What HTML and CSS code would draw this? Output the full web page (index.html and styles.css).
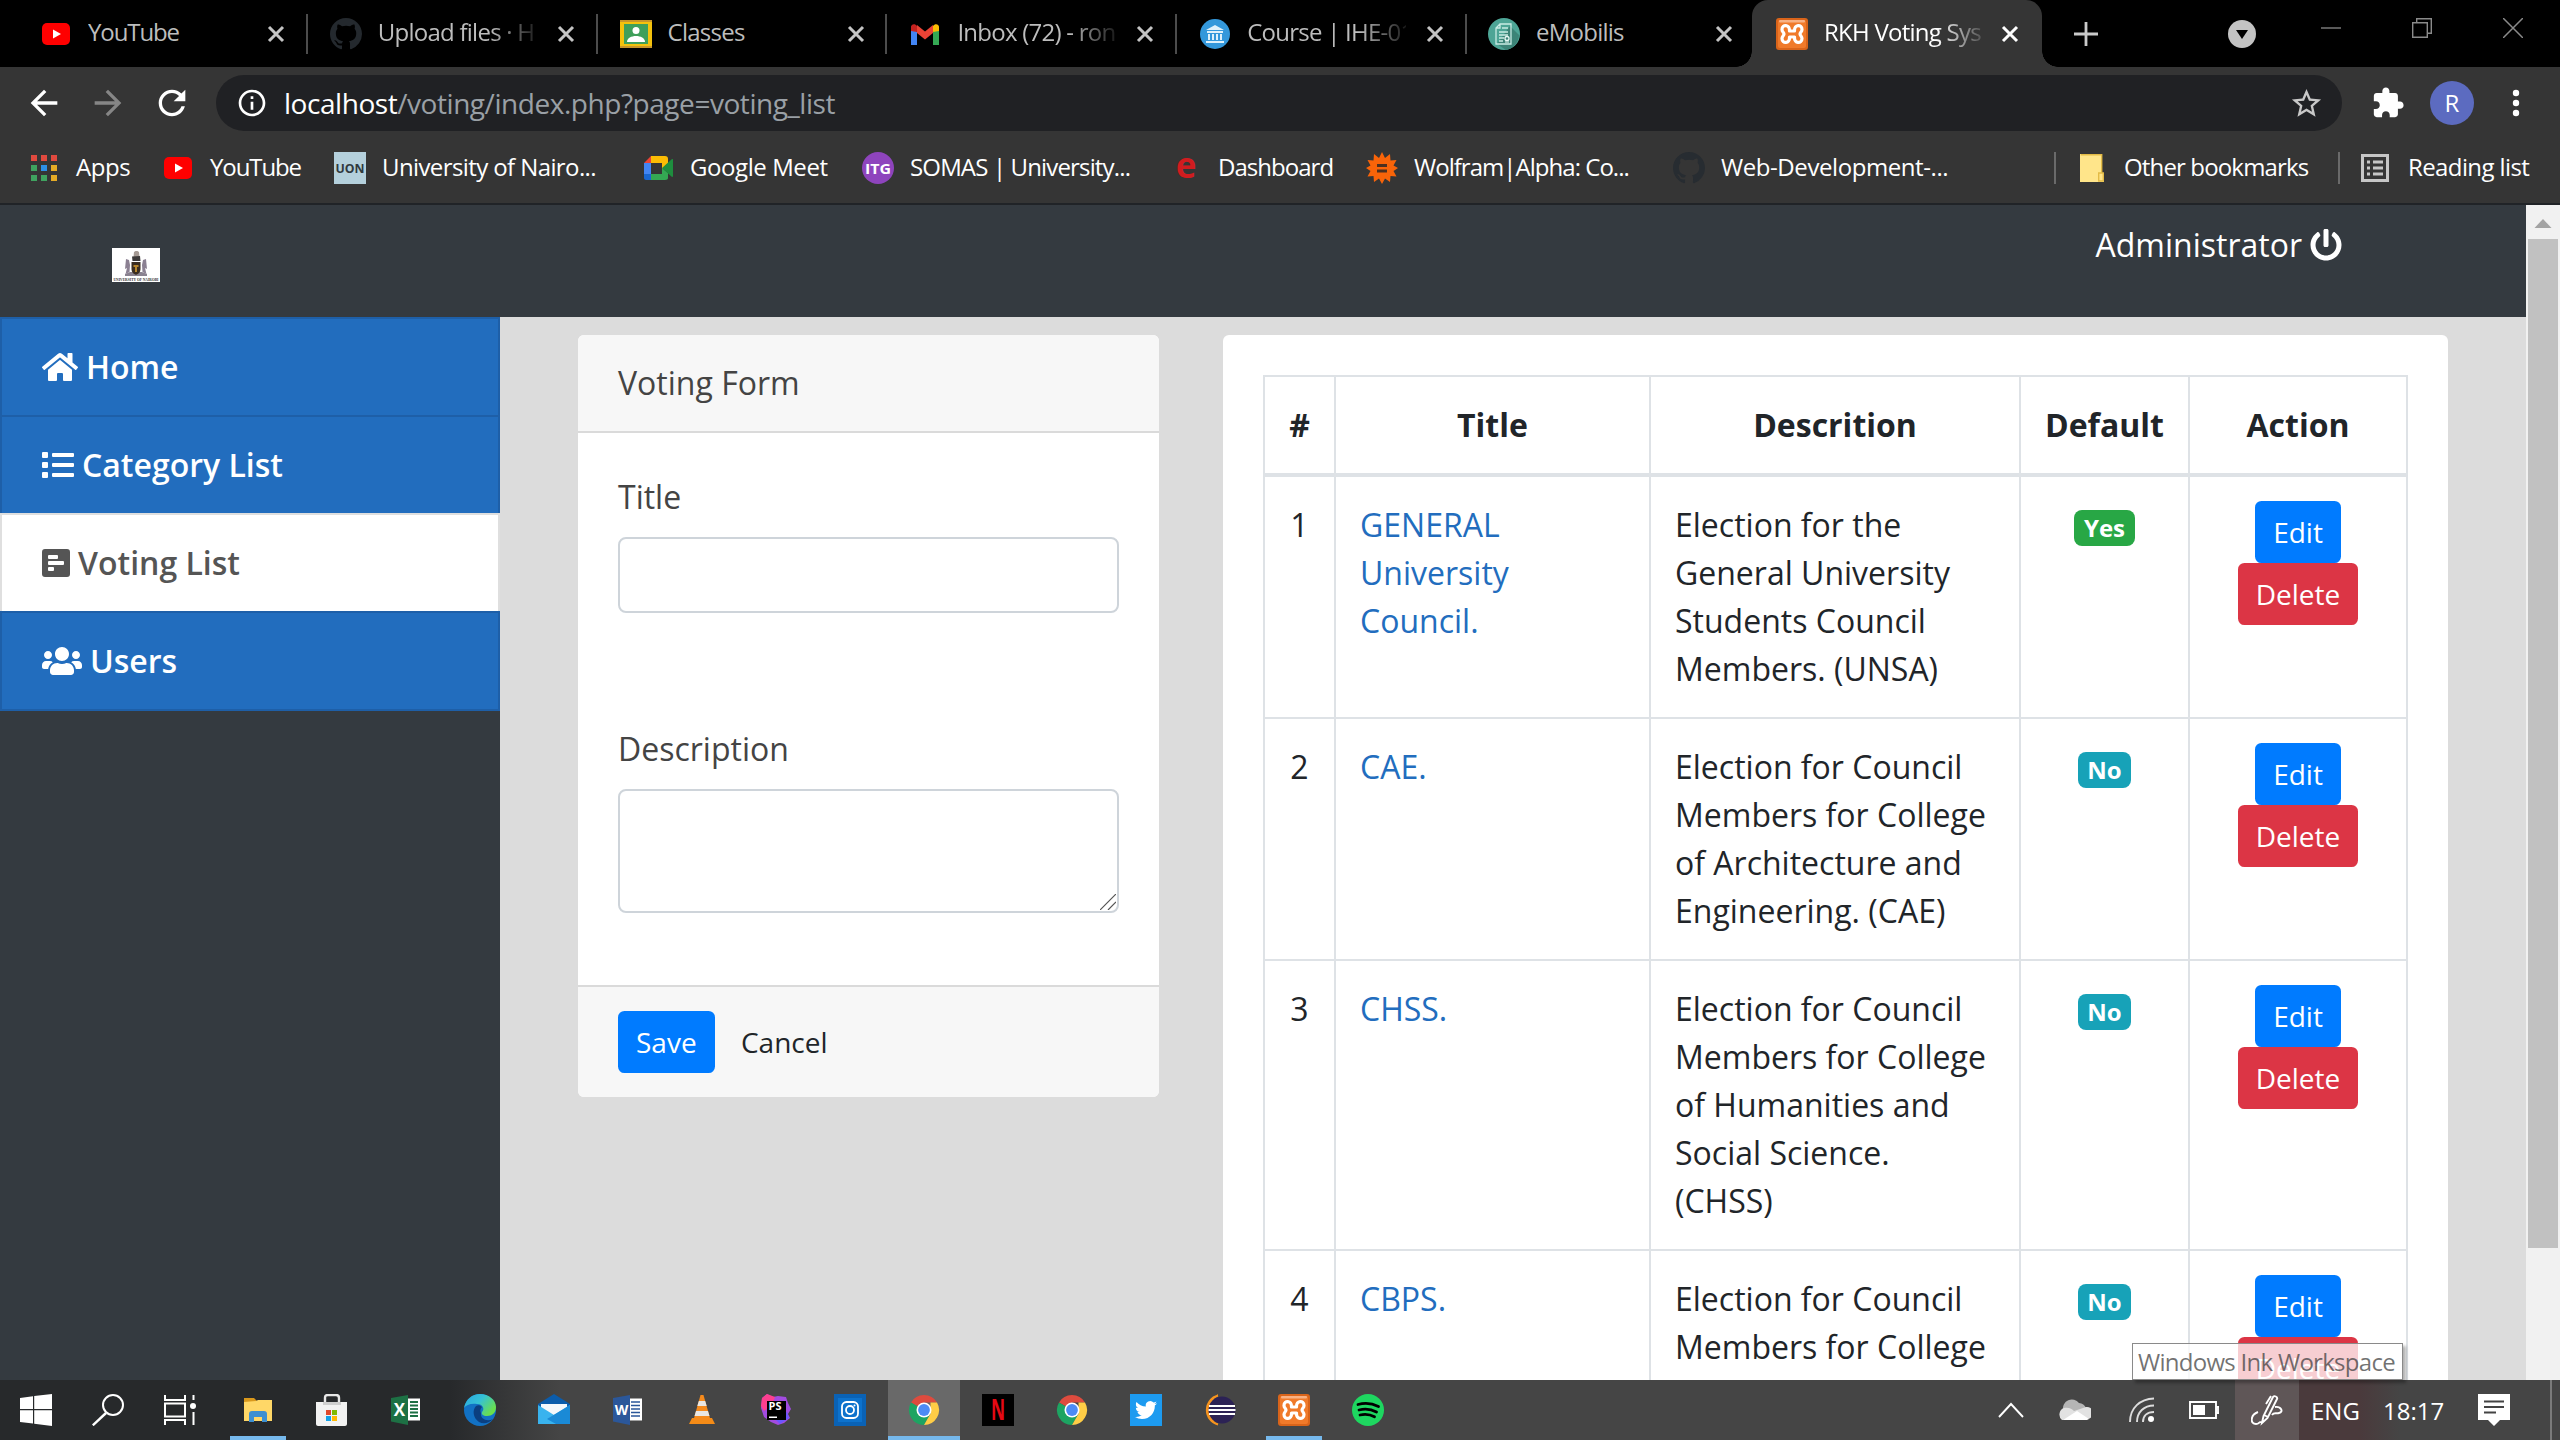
FILE: index.html
```html
<!DOCTYPE html>
<html lang="en">
<head>
<meta charset="utf-8">
<title>RKH Voting System</title>
<link rel="stylesheet" href="styles.css">
</head>
<body>
<svg class="defs" aria-hidden="true">
  <symbol id="x" viewBox="0 0 20 20"><path d="M3 3l14 14M17 3L3 17" fill="none" stroke="currentColor" stroke-width="3"/></symbol>
  <symbol id="youtube" viewBox="0 0 32 32"><rect x="2" y="5" width="28" height="22" rx="5" fill="#f00"/><path d="M13 11.500v9l8-4.500z" fill="#fff"/></symbol>
  <symbol id="github" viewBox="0 0 16 16"><path fill="currentColor" d="M8 0C3.580 0 0 3.580 0 8c0 3.540 2.290 6.530 5.470 7.590.4.070.55-.17.55-.38 0-.19-.01-.82-.01-1.490-2.010.37-2.530-.49-2.690-.94-.09-.23-.48-.94-.82-1.130-.28-.15-.68-.52-.01-.53.63-.01 1.080.58 1.230.82.72 1.210 1.870.87 2.330.66.07-.52.28-.87.51-1.070-1.780-.2-3.640-.89-3.640-3.950 0-.87.31-1.590.82-2.150-.08-.2-.36-1.020.08-2.120 0 0 .67-.21 2.200.82.64-.18 1.320-.27 2-.27s1.360.09 2 .27c1.530-1.040 2.200-.82 2.200-.82.44 1.100.16 1.920.08 2.120.51.56.82 1.270.82 2.150 0 3.070-1.870 3.750-3.650 3.950.29.25.54.73.54 1.480 0 1.070-.01 1.930-.01 2.200 0 .21.15.46.55.38A8.010 8.010 0 0 0 16 8c0-4.420-3.580-8-8-8z"/></symbol>
  <symbol id="xampp" viewBox="0 0 32 32"><rect width="32" height="32" rx="3" fill="#d9641a"/><rect x="2" y="2" width="28" height="28" rx="2" fill="#f07a2a"/><rect x="3" y="2" width="26" height="2.500" rx="1" fill="#f8b184"/><path d="M13.500 13h5C18 6 26 6 26 11.500c0 2.500-2 3-2 4.500s2 2 2 4.500c0 5.500-8 5.500-7.500-1.500h-5C14 26 6 26 6 20.500c0-2.500 2-3 2-4.500s-2-2-2-4.500C6 6 14 6 13.500 13z" fill="#f07a2a" stroke="#fff" stroke-width="3.200" stroke-linejoin="round"/></symbol>
  <symbol id="chrome" viewBox="0 0 32 32"><path d="M16 16L3 8.500A15 15 0 0 1 29 8.500H16z" fill="#dd4b3e"/><path d="M3 8.500A15 15 0 0 0 16 31l6.500-11.300L16 16z" fill="#1da462"/><path d="M29 8.500A15 15 0 0 1 16 31l6.500-11.300V8.500z" fill="#ffcd46"/><circle cx="16" cy="16" r="7.500" fill="#fff"/><circle cx="16" cy="16" r="5.900" fill="#4c8bf5"/></symbol>
</svg>

<header class="tabs">
  <div class="tab"><svg class="fav"><use href="#youtube"/></svg><span class="label snug">YouTube</span><svg class="close"><use href="#x"/></svg></div>
  <div class="tab"><svg class="fav gh"><use href="#github"/></svg><span class="label fade">Upload files · H</span><svg class="close"><use href="#x"/></svg></div>
  <div class="tab"><svg class="fav" viewBox="0 0 32 32"><rect y="2" width="32" height="28" fill="#f4c20d"/><rect y="2" width="32" height="2" fill="#c9962a"/><rect y="28" width="32" height="2" fill="#c9962a"/><rect x="4" y="6" width="24" height="20" fill="#3f9f5a"/><circle cx="16" cy="12.500" r="3.500" fill="#fff"/><path d="M7 24c0-8 18-8 18 0z" fill="#fff"/></svg><span class="label">Classes</span><svg class="close"><use href="#x"/></svg></div>
  <div class="tab"><svg class="fav" viewBox="0 0 32 32"><path d="M2 8v19h6V14z" fill="#4285f4"/><path d="M30 8v19h-6V14z" fill="#34a853"/><path d="M24 14V8c2-3 6-2 6 1v4z" fill="#fbbc04"/><path d="M8 14V8C6 5 2 6 2 9v4z" fill="#c5221f"/><path d="M8 7l8 6.500L24 7v8l-8 6.500L8 15z" fill="#ea4335"/></svg><span class="label fade">Inbox (72) - ron</span><svg class="close"><use href="#x"/></svg></div>
  <div class="tab"><svg class="fav" viewBox="0 0 32 32"><circle cx="16" cy="16" r="15" fill="#3498db"/><path d="M7 12l9-5 9 5zM8 13h16v2H8zM9 16h2v6H9zM13 16h2v6h-2zM17 16h2v6h-2zM21 16h2v6h-2zM7 23h18v2H7z" fill="#dff1fb"/></svg><span class="label fade">Course | IHE-01</span><svg class="close"><use href="#x"/></svg></div>
  <div class="tab"><svg class="fav" viewBox="0 0 32 32"><circle cx="16" cy="16" r="16" fill="#4da596"/><path d="M22 8l9 9a16 16 0 0 1-13 15l-9-6z" fill="#3c8477"/><path d="M12 6h11v20H8V10zM12 6v4H8M14 10h6M11 14h9M11 17h9M11 20h5M11 23h4" fill="none" stroke="#c8ebe4" stroke-width="1.300"/><circle cx="19" cy="20.500" r="2" fill="none" stroke="#e8faf6" stroke-width="1.300"/><path d="M18 22v3M20 22v3" stroke="#e8faf6"/></svg><span class="label">eMobilis</span><svg class="close"><use href="#x"/></svg></div>
  <div class="tab active"><svg class="fav"><use href="#xampp"/></svg><span class="label fade">RKH Voting Sys</span><svg class="close"><use href="#x"/></svg></div>
  <div class="window-controls">
    <svg viewBox="0 0 24 24" width="24" height="24"><path d="M12 0v24M0 12h24" stroke="#c9c9c9" stroke-width="2.800"/></svg>
    <svg viewBox="0 0 28 28" width="28" height="28"><circle cx="14" cy="14" r="14" fill="#c3c3c3"/><path d="M8 10h12l-6 9z" fill="#000"/></svg>
    <svg class="raised" viewBox="0 0 20 20" width="20" height="20"><path d="M0 10h20" stroke="#777" stroke-width="1.500"/></svg>
    <svg class="raised" viewBox="0 0 20 20" width="20" height="20"><path d="M.7 4.700h14.600v14.600H.7zM4.700 4.500V.7h14.600v14.600h-3.800" fill="none" stroke="#8a8a8a" stroke-width="1.400"/></svg>
    <svg class="raised" viewBox="0 0 20 20" width="20" height="20"><path d="M0 0l20 20M20 0L0 20" stroke="#8a8a8a" stroke-width="1.500"/></svg>
  </div>
</header>

<nav class="toolbar">
  <svg viewBox="0 0 24 24"><path fill="#fff" d="M20 11H7.830l5.590-5.590L12 4l-8 8 8 8 1.410-1.410L7.830 13H20v-2z"/></svg>
  <svg viewBox="0 0 24 24"><path fill="#868686" d="M4 11h12.170l-5.590-5.590L12 4l8 8-8 8-1.410-1.410L16.170 13H4z"/></svg>
  <svg viewBox="0 0 24 24"><path fill="#fff" d="M17.650 6.350C16.200 4.900 14.210 4 12 4c-4.420 0-7.990 3.580-7.990 8s3.570 8 7.990 8c3.730 0 6.840-2.550 7.730-6h-2.080c-.82 2.330-3.040 4-5.650 4-3.310 0-6-2.690-6-6s2.690-6 6-6c1.660 0 3.140.69 4.220 1.780L13 11h7V4l-2.350 2.350z"/></svg>
  <div class="omnibox">
    <svg viewBox="0 0 24 24" width="32" height="32"><path fill="#fff" d="M11 7h2v2h-2zm0 4h2v6h-2zm1-9C6.480 2 2 6.480 2 12s4.480 10 10 10 10-4.480 10-10S17.520 2 12 2zm0 18c-4.410 0-8-3.590-8-8s3.590-8 8-8 8 3.590 8 8-3.590 8-8 8z"/></svg>
    <span class="url"><b>localhost</b>/voting/index.php?page=voting_list</span>
    <svg viewBox="0 0 24 24" width="35" height="35"><path fill="#c8c8c8" d="M22 9.240l-7.190-.62L12 2 9.190 8.630 2 9.240l5.460 4.730L5.820 21 12 17.270 18.180 21l-1.630-7.030L22 9.240zM12 15.400l-3.760 2.270 1-4.280-3.320-2.880 4.380-.38L12 6.100l1.710 4.040 4.380.38-3.320 2.880 1 4.280L12 15.400z"/></svg>
  </div>
  <svg class="puzzle" viewBox="0 0 24 24"><path fill="#fff" d="M20.500 11H19V7c0-1.100-.9-2-2-2h-4V3.500C13 2.120 11.880 1 10.500 1S8 2.120 8 3.500V5H4c-1.100 0-1.990.9-1.990 2v3.800H3.500c1.490 0 2.700 1.210 2.700 2.700s-1.210 2.700-2.700 2.700H2V20c0 1.100.9 2 2 2h3.800v-1.500c0-1.490 1.210-2.700 2.700-2.700 1.490 0 2.700 1.210 2.700 2.700V22H17c1.100 0 2-.9 2-2v-4h1.500c1.380 0 2.500-1.120 2.500-2.500S21.880 11 20.500 11z"/></svg>
  <span class="avatar">R</span>
  <svg class="dots" viewBox="0 0 8 28"><circle cx="4" cy="4" r="3.200" fill="#fff"/><circle cx="4" cy="14" r="3.200" fill="#fff"/><circle cx="4" cy="24" r="3.200" fill="#fff"/></svg>
</nav>

<nav class="bookmarks">
  <a class="bm apps-link"><svg viewBox="0 0 32 32"><path d="M3 3h6v6H3zM13 3h6v6h-6zM23 3h6v6h-6z" fill="#e04a3f"/><path d="M3 13h6v6H3zM3 23h6v6H3zM13 23h6v6h-6z" fill="#3fa35f"/><path d="M13 13h6v6h-6z" fill="#2d8fe5"/><path d="M23 13h6v6h-6zM23 23h6v6h-6z" fill="#e5ab26"/></svg><span>Apps</span></a>
  <a class="bm snug"><svg><use href="#youtube"/></svg><span>YouTube</span></a>
  <a class="bm uon"><svg viewBox="0 0 32 32"><rect width="32" height="32" fill="#b4d0dc"/><text x="16" y="20.500" text-anchor="middle" font-size="12.500" font-weight="700" fill="#30393f" textLength="29" lengthAdjust="spacingAndGlyphs">UON</text></svg><span>University of Nairo...</span></a>
  <a class="bm loose"><svg viewBox="0 0 32 32"><path d="M9 4v7H2z" fill="#ea4335"/><path d="M9 4h14c2 0 3 1 3 3v5l-6 5v-6H9z" fill="#fbbc04"/><path d="M2 11h7v11H2z" fill="#4285f4"/><path d="M2 22h7v6H4c-1 0-2-1-2-2z" fill="#1967d2"/><path d="M9 22h11v-6l6 5v5c0 1-1 2-3 2H9z" fill="#34a853"/><path d="M20 16l10-9c1 0 1 .5 1 1v16c0 1-1 1-1 1z" fill="#1e8e3e"/></svg><span>Google Meet</span></a>
  <a class="bm"><svg viewBox="0 0 32 32"><circle cx="16" cy="16" r="16" fill="#8e44bd"/><text x="16" y="21.500" text-anchor="middle" font-size="15" font-weight="700" fill="#fff" textLength="26" lengthAdjust="spacingAndGlyphs">ITG</text></svg><span>SOMAS | University...</span></a>
  <a class="bm dash"><svg viewBox="0 0 32 32"><text x="16" y="26" text-anchor="middle" font-size="35" font-weight="700" fill="#d01c1f">e</text></svg><span>Dashboard</span></a>
  <a class="bm dash"><svg viewBox="0 0 32 32"><path d="M16 0l3 6 5-4 .5 6.500 6-.5-3 5.500L32 16l-4.500 3 3 5.500-6-.5L24 30l-5-3.500L16 32l-3-5.500L8 30l-.5-6-6 .5 3-5.500L0 16l4.500-2.500-3-5.500 6 .5L8 2l5 4z" fill="#f96409"/><path d="M11 12h10v3H11zM11 17.500h10v3H11z" fill="#4c3020"/></svg><span>Wolfram|Alpha: Co...</span></a>
  <a class="bm loose"><svg class="gh dark"><use href="#github"/></svg><span>Web-Development-...</span></a>
  <i class="rule"></i>
  <a class="bm other"><svg viewBox="0 0 24 28"><path d="M0 0h22v19h2v9H0z" fill="#ffe58a"/><path d="M.7.700h21v18M18.700 27v-8h4.600v8z" fill="none" stroke="#e3bb46" stroke-width="1.400"/></svg><span>Other bookmarks</span></a>
  <i class="rule"></i>
  <a class="bm reading"><svg viewBox="0 0 28 28"><path d="M1.500 1.500h25v25h-25z" fill="none" stroke="#c6c6c6" stroke-width="3"/><path d="M6 8h3M12 8h10M6 14h3M12 14h10M6 20h3M12 20h10" stroke="#c6c6c6" stroke-width="2.800"/></svg><span>Reading list</span></a>
</nav>

<div class="viewport">
  <div class="page">
    <div class="topbar">
      <svg class="crest" viewBox="0 0 48 34"><rect width="48" height="34" fill="#fff"/><path d="M22 4c1-1.500 4-1.500 5 0l.5 5h-6z" fill="#a59a94"/><path d="M20 8.500l8-.5.500 5h-8z" fill="#3d3a3a"/><path d="M14 11l3 1 1 5-.5 7-4 2 1.500-6-2 1zM34 11l-3 1-1 5 .5 7 4 2-1.500-6 2 1z" fill="#8b8092"/><path d="M13 26l5-2h12l5 2v2H13z" fill="#8a8290"/><path d="M19.500 14h9v7c0 4-3 5-4.500 6-1.500-1-4.500-2-4.500-6z" fill="#3a2c20"/><path d="M21.500 17h5v2h-5zM23 19h2v5h-2z" fill="#b8862c"/><text x="24" y="33" font-size="4.200" font-family="Liberation Serif, serif" font-weight="700" fill="#333" text-anchor="middle" textLength="45" lengthAdjust="spacingAndGlyphs">UNIVERSITY OF NAIROBI</text></svg>
      <a class="account">Administrator <svg viewBox="0 0 512 512"><path fill="currentColor" d="M400 54.100c63 45 104 118.600 104 201.900 0 136.800-110.800 247.700-247.500 248C120 504.300 8.200 393 8 256.400 7.900 173.100 48.900 99.300 111.800 54.200c11.700-8.300 28-4.800 35 7.700L162.600 90c5.900 10.500 3.100 23.800-6.600 31-41.500 30.800-68 79.600-68 134.900-.1 92.300 74.500 168.100 168 168.100 91.600 0 168.600-74.200 168-169.100-.3-51.800-24.700-101.800-68.100-134-9.700-7.200-12.400-20.500-6.500-30.900l15.800-28.100c7-12.400 23.200-16.100 34.800-7.800zM296 264V24c0-13.300-10.700-24-24-24h-32c-13.300 0-24 10.700-24 24v240c0 13.300 10.700 24 24 24h32c13.300 0 24-10.700 24-24z"/></svg></a>
    </div>
    <div class="columns">
      <aside class="sidebar">
        <a class="item"><svg viewBox="0 0 576 512" width="36" height="32"><path fill="currentColor" d="M280.370 148.260L96 300.110V464a16 16 0 0 0 16 16l112.060-.29a16 16 0 0 0 15.920-16V368a16 16 0 0 1 16-16h64a16 16 0 0 1 16 16v95.640a16 16 0 0 0 16 16.050L464 480a16 16 0 0 0 16-16V300L295.670 148.260a12.190 12.190 0 0 0-15.300 0zM571.600 251.470L488 182.560V44.050a12 12 0 0 0-12-12h-56a12 12 0 0 0-12 12v72.610L318.470 43a48 48 0 0 0-61 0L4.340 251.470a12 12 0 0 0-1.600 16.900l25.500 31A12 12 0 0 0 45.150 301l235.220-193.740a12.190 12.190 0 0 1 15.300 0L530.900 301a12 12 0 0 0 16.900-1.600l25.500-31a12 12 0 0 0-1.700-16.930z"/></svg> Home</a>
        <a class="item"><svg viewBox="0 0 512 512" width="32" height="32"><path fill="currentColor" d="M80 368H16a16 16 0 0 0-16 16v64a16 16 0 0 0 16 16h64a16 16 0 0 0 16-16v-64a16 16 0 0 0-16-16zm0-320H16A16 16 0 0 0 0 64v64a16 16 0 0 0 16 16h64a16 16 0 0 0 16-16V64a16 16 0 0 0-16-16zm0 160H16a16 16 0 0 0-16 16v64a16 16 0 0 0 16 16h64a16 16 0 0 0 16-16v-64a16 16 0 0 0-16-16zm416 176H176a16 16 0 0 0-16 16v32a16 16 0 0 0 16 16h320a16 16 0 0 0 16-16v-32a16 16 0 0 0-16-16zm0-320H176a16 16 0 0 0-16 16v32a16 16 0 0 0 16 16h320a16 16 0 0 0 16-16V80a16 16 0 0 0-16-16zm0 160H176a16 16 0 0 0-16 16v32a16 16 0 0 0 16 16h320a16 16 0 0 0 16-16v-32a16 16 0 0 0-16-16z"/></svg> Category List</a>
        <a class="item current"><svg viewBox="0 0 448 512" width="28" height="32"><path fill="currentColor" fill-rule="evenodd" d="M48 32h352a48 48 0 0 1 48 48v352a48 48 0 0 1-48 48H48a48 48 0 0 1-48-48V80a48 48 0 0 1 48-48zM112 128a16 16 0 0 0-16 16v32a16 16 0 0 0 16 16h128a16 16 0 0 0 16-16v-32a16 16 0 0 0-16-16zM112 224a16 16 0 0 0-16 16v32a16 16 0 0 0 16 16h224a16 16 0 0 0 16-16v-32a16 16 0 0 0-16-16zM112 320a16 16 0 0 0-16 16v32a16 16 0 0 0 16 16h64a16 16 0 0 0 16-16v-32a16 16 0 0 0-16-16z"/></svg> Voting List</a>
        <a class="item"><svg viewBox="0 0 640 512" width="40" height="32"><path fill="currentColor" d="M96 224c35.300 0 64-28.700 64-64s-28.700-64-64-64-64 28.700-64 64 28.700 64 64 64zm448 0c35.300 0 64-28.700 64-64s-28.700-64-64-64-64 28.700-64 64 28.700 64 64 64zm32 32h-64c-17.600 0-33.500 7.100-45.100 18.600 40.300 22.100 68.900 62 75.100 109.400h66c17.700 0 32-14.300 32-32v-32c0-35.300-28.700-64-64-64zm-256 0c61.900 0 112-50.100 112-112S381.900 32 320 32 208 82.100 208 144s50.100 112 112 112zm76.800 32h-8.300c-20.800 10-43.900 16-68.500 16s-47.600-6-68.500-16h-8.300C179.600 288 128 339.600 128 403.200V432c0 26.500 21.500 48 48 48h288c26.500 0 48-21.500 48-48v-28.800c0-63.600-51.600-115.200-115.200-115.200zm-223.700-13.400C161.500 263.100 145.600 256 128 256H64c-35.300 0-64 28.700-64 64v32c0 17.700 14.300 32 32 32h65.900c6.300-47.400 34.900-87.300 75.200-109.400z"/></svg> Users</a>
      </aside>
      <main class="main">
        <form class="card form">
          <div class="card-header">Voting Form</div>
          <div class="card-body">
            <label for="title">Title</label>
            <input id="title" class="control" type="text">
            <label for="description">Description</label>
            <div class="area-wrap">
              <textarea id="description" class="control area"></textarea>
              <svg class="grip" viewBox="0 0 16 16"><path d="M0 16L16 0M8 16l8-8" stroke="#555" stroke-width="1.200"/></svg>
            </div>
          </div>
          <div class="card-footer"><button type="button" class="btn primary">Save</button> <button type="button" class="btn plain">Cancel</button></div>
        </form>
        <section class="card list">
          <table>
            <colgroup><col class="c-num"><col class="c-title"><col class="c-desc"><col class="c-default"><col class="c-action"></colgroup>
            <thead><tr><th>#</th><th>Title</th><th>Descrition</th><th>Default</th><th>Action</th></tr></thead>
            <tbody>
              <tr><td class="mid">1</td><td><a>GENERAL University Council.</a></td><td>Election for the General University Students Council Members. (UNSA)</td><td class="mid"><span class="badge yes">Yes</span></td><td class="mid"><button class="btn primary">Edit</button><br><button class="btn danger">Delete</button></td></tr>
              <tr><td class="mid">2</td><td><a>CAE.</a></td><td>Election for Council Members for College of Architecture and Engineering. (CAE)</td><td class="mid"><span class="badge no">No</span></td><td class="mid"><button class="btn primary">Edit</button><br><button class="btn danger">Delete</button></td></tr>
              <tr><td class="mid">3</td><td><a>CHSS.</a></td><td>Election for Council Members for College of Humanities and Social Science.<br>(CHSS)</td><td class="mid"><span class="badge no">No</span></td><td class="mid"><button class="btn primary">Edit</button><br><button class="btn danger">Delete</button></td></tr>
              <tr><td class="mid">4</td><td><a>CBPS.</a></td><td>Election for Council Members for College</td><td class="mid"><span class="badge no">No</span></td><td class="mid"><button class="btn primary">Edit</button><br><button class="btn danger">Delete</button></td></tr>
            </tbody>
          </table>
        </section>
      </main>
    </div>
  </div>
  <div class="scrollbar"><svg viewBox="0 0 34 34" width="34" height="34"><path d="M17 14l8.500 9h-17z" fill="#a3a3a3"/></svg><div class="thumb"></div></div>
</div>

<footer class="taskbar">
  <div class="apps">
    <a class="app"><svg viewBox="0 0 32 32"><path d="M0 4l13-1.800V15H0zM14.200 2L32 0v15H14.200zM0 16.200h13v13.300L0 28zM14.200 16.200H32V32l-17.800-2.300z" fill="#fff"/></svg></a>
    <a class="app"><svg viewBox="0 0 32 32"><circle cx="21" cy="11" r="10" fill="none" stroke="#fff" stroke-width="2"/><path d="M14 19L.8 31.300" stroke="#fff" stroke-width="2.400"/></svg></a>
    <a class="app"><svg viewBox="0 0 32 32"><path d="M1 1v5h20V1M1 31v-5h20v5M1 9.500h20v13H1zM29.500 1v5M29.500 18v13" fill="none" stroke="#fff" stroke-width="2"/><circle cx="29" cy="12" r="3" fill="#fff"/></svg></a>
    <a class="app open"><svg viewBox="0 0 32 32"><path d="M2 4h10l3 3v5H2z" fill="#d9981c"/><path d="M2 8l12-1 2-1h14v21H2z" fill="#ffd767"/><path d="M7 28v-8c0-2 1-3 3-3h12c2 0 3 1 3 3v8h-5v-5h-8v5z" fill="#3d8fd1"/></svg></a>
    <a class="app"><svg viewBox="0 0 32 32"><path d="M9 9V4c0-2 1-3 3-3h8c2 0 3 1 3 3v5" fill="none" stroke="#e8e8e8" stroke-width="2.400"/><path d="M0 8h31v22c0 1-1 2-2 2H2c-1 0-2-1-2-2z" fill="#f2f2f2"/><path d="M7 8h18v3H7z" fill="#cfcfcf"/><path d="M10 16h5v5h-5z" fill="#e0492c"/><path d="M16 16h5v5h-5z" fill="#7fba00"/><path d="M10 22h5v5h-5z" fill="#12a1e8"/><path d="M16 22h5v5h-5z" fill="#ffb900"/></svg></a>
    <a class="app"><svg viewBox="0 0 32 32"><path d="M18 4.500h12v22H18z" fill="#fff"/><path d="M20 8h8M20 11.500h8M20 15h8M20 18.500h8M20 22h8" stroke="#1d7044" stroke-width="2"/><path d="M1 4l17-3v30L1 27.500z" fill="#1d7044"/><text x="9.500" y="22" font-size="17" font-weight="700" fill="#fff" text-anchor="middle">X</text></svg></a>
    <a class="app"><svg viewBox="0 0 32 32"><defs><linearGradient id="e1" x1="0" y1="0" x2="1" y2=".6"><stop offset="0" stop-color="#2aa5df"/><stop offset=".5" stop-color="#35c1d6"/><stop offset="1" stop-color="#6be04a"/></linearGradient></defs><circle cx="16" cy="16" r="16" fill="#1271c4"/><path d="M0 14C2 5 8 0 16 0c9 0 16 6 16 13 0 6-4 9-9 9-4 0-6-2-5-4 3-3 1-8-5-8-6-1-11 1-13 4z" fill="url(#e1)"/><path d="M12 12c-4 4-3 12 3 16 4 2 9 2 14-3-6 3-13 0-12-6-1-2-1-4 1-6-2-2-4-2-6-1z" fill="#0b3f80"/></svg></a>
    <a class="app"><svg viewBox="0 0 32 32"><path d="M0 10L16 0l16 10v3H0z" fill="#0b5cab"/><path d="M3 10h26v12H3z" fill="#f3f7fb"/><path d="M0 11l16 10 16-10v19H0z" fill="#39b3ee"/><path d="M32 11L9 25l9 5h14z" fill="#1a8ad6"/></svg></a>
    <a class="app"><svg viewBox="0 0 32 32"><path d="M18 4.500h12v22H18z" fill="#fff"/><path d="M19 8h9M19 11.500h9M19 15h9M19 18.500h9M19 22h9" stroke="#2b579a" stroke-width="1.700"/><path d="M1 4l17-3v30L1 27.500z" fill="#2b579a"/><text x="9.500" y="21" font-size="14" font-weight="700" fill="#fff" text-anchor="middle">W</text></svg></a>
    <a class="app"><svg viewBox="0 0 32 32"><path d="M6 24h20l3 6H3z" fill="#f48b17"/><path d="M14.500 1h3l7 25h-17z" fill="#f58a1c"/><path d="M12.800 7h6.400l1.500 5h-9.400zM10 17h12l1.500 5h-15z" fill="#e9e6e2"/></svg></a>
    <a class="app"><svg viewBox="0 0 32 32"><path d="M2 4l5-4 6 3 5-1 8 1 2 6 3 6-3 5 2 4-6 5-6 2-7-3-7-5-3-9z" fill="#a24be0"/><path d="M2 4l5-4 8 3-3 8-8 6-3-5z" fill="#fc3f8f"/><path d="M20 30l9-6-2-6-13 6z" fill="#6b57ff"/><path d="M7 7h19v19H7z" fill="#000"/><path d="M9 22.500h8v1.500H9z" fill="#fff"/><text x="8.500" y="16" font-size="11" font-weight="700" fill="#fff">PS</text></svg></a>
    <a class="app"><svg viewBox="0 0 32 32"><rect width="32" height="32" fill="#0a62b5"/><rect x="4" y="4" width="24" height="24" fill="#0d72cc"/><rect x="8" y="8" width="16" height="16" rx="4.500" fill="none" stroke="#fff" stroke-width="1.800"/><circle cx="16" cy="16" r="4" fill="none" stroke="#fff" stroke-width="1.800"/><circle cx="20.500" cy="11.500" r="1" fill="#fff"/></svg></a>
    <a class="app open focused"><svg><use href="#chrome"/></svg></a>
    <a class="app"><svg viewBox="0 0 32 32"><rect width="32" height="32" fill="#000"/><text transform="translate(16 26) scale(.62 1)" font-size="28" font-weight="700" fill="#e50914" text-anchor="middle">N</text></svg></a>
    <a class="app"><svg><use href="#chrome"/></svg></a>
    <a class="app"><svg viewBox="0 0 32 32"><rect width="32" height="32" fill="#1d9bf0"/><path transform="translate(5 5) scale(.92)" fill="#fff" d="M23.953 4.570a10 10 0 01-2.825.775 4.958 4.958 0 002.163-2.723c-.951.555-2.005.959-3.127 1.184a4.920 4.920 0 00-8.384 4.482C7.690 8.095 4.067 6.130 1.640 3.162a4.822 4.822 0 00-.666 2.475c0 1.710.87 3.213 2.188 4.096a4.904 4.904 0 01-2.228-.616v.06a4.923 4.923 0 003.946 4.827 4.996 4.996 0 01-2.212.085 4.936 4.936 0 004.604 3.417 9.867 9.867 0 01-6.102 2.105c-.39 0-.779-.023-1.170-.067a13.995 13.995 0 007.557 2.209c9.053 0 13.998-7.496 13.998-13.985 0-.21 0-.42-.015-.63A9.935 9.935 0 0024 4.590z"/></svg></a>
    <a class="app"><svg viewBox="0 0 32 32"><path d="M14 1.500a15 15 0 0 0 0 29C2 27 2 5 14 1.500z" fill="#f7941e" stroke="#f7941e" stroke-width="2"/><circle cx="18" cy="16" r="13.500" fill="#2c2255"/><path d="M5 12h26M4.500 16h27M5 20h26" stroke="#fff" stroke-width="2"/></svg></a>
    <a class="app open"><svg><use href="#xampp"/></svg></a>
    <a class="app"><svg viewBox="0 0 32 32"><circle cx="16" cy="16" r="16" fill="#1ed760"/><path d="M6 10.500c7-2 14-1.300 20.500 2M7 16c6-1.600 12-1 17.500 2M8 21c5-1.200 10-.7 14.500 1.800" fill="none" stroke="#000" stroke-width="2.800" stroke-linecap="round"/></svg></a>
  </div>
  <div class="tray">
    <svg viewBox="0 0 26 16" width="26" height="16"><path d="M1 15L13 2l12 13" fill="none" stroke="#fff" stroke-width="1.900"/></svg>
    <svg viewBox="0 0 32 24" width="32" height="24"><path d="M4 12a9 9 0 0 1 16-7 8 8 0 0 1 7 5l-12 7z" fill="#b5b5b5"/><path d="M3 22a7 7 0 0 1 2-12c5-1 8 1 10 3l12-4a6 6 0 0 1 2 12z" fill="#e2e2e2"/><path d="M4 22l14-9 12 8-2 1z" fill="#fff"/></svg>
    <svg viewBox="0 0 26 26" width="26" height="26"><path d="M1 25C1 11 11 2 25 1.500M8 25C8 15 15 8.500 25 8.500M14 25c0-6 4-10 11-10" fill="none" stroke="#ddd" stroke-width="1.900"/><circle cx="22" cy="22" r="3" fill="#fff"/></svg>
    <svg viewBox="0 0 30 18" width="30" height="18"><path d="M1 1h26v16H1zM28 6h2v6h-2z" fill="none" stroke="#fff" stroke-width="1.900"/><path d="M4 4h12v10H4z" fill="#fff"/></svg>
    <span class="ink"><svg viewBox="0 0 32 32" width="32" height="32"><path d="M11 29l1.500-7L22 3c1-2 5 0 4 2l-9.500 19zM13 21l4 2M15 10l5-8M7 18c-8 3-8 12-2 12 4 0 2-3 7-2M24 13c6-1 9 5 4 6-3 1-5-1-7 2" fill="none" stroke="#fff" stroke-width="1.900"/></svg></span>
    <span class="lang">ENG</span>
    <span class="clock">18:17</span>
    <svg viewBox="0 0 32 32" width="32" height="32"><path d="M0 0h32v26H22l-6 6-6-6H0z" fill="#fff"/><path d="M6 7.500h20M6 13h20M6 18.500h12" stroke="#444" stroke-width="2"/></svg>
  </div>
  <div class="tooltip">Windows Ink Workspace</div>
</footer>
</body>
</html>
```
FILE: styles.css
```css
* { box-sizing: border-box; }

body {
  margin: 0;
  width: 2560px;
  height: 1440px;
  overflow: hidden;
  display: flex;
  flex-direction: column;
  font-family: "Open Sans", "Noto Sans", sans-serif;
  color: #212529;
}

.defs { display: none; }
svg { display: block; flex: none; letter-spacing: 0; }

/* tab strip */
.tabs {
  height: 67px;
  display: flex;
  padding-left: 17px;
  background: #000;
  font-size: 24px;
  letter-spacing: -.75px;
  color: #bdbdbd;
}
.tab {
  position: relative;
  width: 289.800px;
  height: 67px;
  padding: 0 19px 0 23px;
  display: flex;
  align-items: center;
}
.tab:nth-child(6) { width: 288px; margin-left: -1px; padding-right: 17px; }
.tab:nth-child(-n+5)::after {
  content: "";
  position: absolute;
  right: -1px;
  top: 14px;
  width: 2px;
  height: 40px;
  background: #4c4c4c;
}
.fav { width: 32px; height: 32px; margin-right: 16px; }
.gh { color: #24292e; }
.gh.dark { color: #272c31; }
.label { width: 159px; margin-top: -3px; overflow: hidden; white-space: nowrap; line-height: 34px; }
.snug { letter-spacing: -1.100px; }
.fade { -webkit-mask-image: linear-gradient(90deg, #000 112px, transparent 166px); mask-image: linear-gradient(90deg, #000 112px, transparent 166px); }
.close { width: 20px; height: 20px; margin-left: 19px; color: #c4c4c4; }
.tab.active { background: #353535; color: #fff; border-radius: 16px 16px 0 0; margin-left: -1px; width: 290px; padding-left: 24px; }
.tab.active .close { color: #fff; margin-left: 17px; }
.tab.active::before, .tab.active::after {
  content: "";
  position: absolute;
  bottom: 0;
  width: 16px;
  height: 16px;
}
.tab.active::before { left: -16px; background: radial-gradient(circle at 0 0, #000 15.5px, #353535 16px); }
.tab.active::after { right: -16px; background: radial-gradient(circle at 100% 0, #000 15.5px, #353535 16px); }
.window-controls { display: flex; align-items: center; padding-left: 32px; }
.window-controls svg:nth-child(2) { margin-left: 130px; }
.window-controls svg:nth-child(3) { margin-left: 65px; }
.window-controls svg:nth-child(n+4) { margin-left: 71px; }
.window-controls .raised { margin-top: -11px; }

/* toolbar */
.toolbar {
  height: 72px;
  display: flex;
  align-items: center;
  padding: 0 40px 0 24px;
  background: #353535;
}
.toolbar > svg { width: 40px; height: 40px; margin-right: 24px; }
.omnibox {
  width: 2128px;
  height: 56px;
  display: flex;
  align-items: center;
  padding: 0 18px 0 20px;
  border-radius: 28px;
  background: #202124;
  font-size: 28px;
}
.url { margin-left: 16px; color: #9aa0a6; white-space: nowrap; letter-spacing: -.45px; }
.url b { font-weight: 400; color: #fff; }
.omnibox svg:last-child { margin-left: auto; }
.toolbar > .puzzle { width: 34px; height: 34px; margin: 0 25px 0 29px; }
.avatar {
  width: 44px;
  height: 44px;
  border-radius: 50%;
  background: #5c6bc0;
  color: #fff;
  font-size: 24px;
  line-height: 44px;
  text-align: center;
}
.toolbar > .dots { width: 8px; height: 28px; margin: 0 0 0 38px; }

/* bookmarks */
.bookmarks {
  height: 66px;
  display: grid;
  grid-template-columns: 134px 172px 308px 220px 308px 196px 307px 381px 26px 258px 23px 1fr;
  align-items: center;
  padding: 0 0 7px 28px;
  background: #353535;
  border-bottom: 2px solid #202327;
  font-size: 24px;
  color: #fff;
}
.bm { display: flex; align-items: center; white-space: nowrap; letter-spacing: -.85px; }
.bm span { margin-top: -3px; }
.bm svg { width: 32px; height: 32px; margin-right: 16px; }
.bm.snug { letter-spacing: -1.100px; }
.bm.dash { letter-spacing: -.97px; }
.bm.uon, .bm.reading { letter-spacing: -.6px; }
.bm.loose, .bm.apps-link { letter-spacing: -.42px; }
.bm.other svg { width: 24px; height: 28px; margin-right: 20px; }
.bm.reading svg { width: 28px; height: 28px; margin-right: 19px; }
.rule { width: 2px; height: 32px; background: #6a6a6a; }

/* page */
.viewport { flex: 1; min-height: 0; display: flex; overflow: hidden; }
.page { flex: 1; display: flex; flex-direction: column; font-size: 32px; line-height: 48px; }
.topbar {
  height: 112px;
  flex: none;
  display: flex;
  justify-content: space-between;
  align-items: flex-start;
  padding: 16px 184px 0 112px;
  background: #343a40;
}
.crest { width: 48px; height: 34px; margin-top: 27px; }
.account { display: flex; align-items: center; gap: 8px; color: #fff; }
.account svg { width: 32px; height: 32px; }
.columns { flex: 1; min-height: 0; display: flex; }
.sidebar { width: 500px; background: #343a40; }
.item {
  display: flex;
  align-items: center;
  gap: 8px;
  height: 98px;
  padding: 0 40px;
  border: 2px solid #1e5fa8;
  border-bottom: 0;
  background: #226dbe;
  color: #fff;
  font-weight: 600;
}
.item:nth-child(4) { height: 100px; border-bottom: 2px solid #1e5fa8; }
.item.current { background: #fff; color: #555; border-color: #dfdfdf; }
.main {
  flex: 1;
  display: flex;
  align-items: flex-start;
  gap: 60px;
  padding: 16px 0 0 76px;
  background: #dcdcdc;
}
.card { background: #fff; border: 2px solid transparent; background-clip: padding-box; border-radius: 8px; overflow: hidden; }
.form { width: 585px; color: #444; }
.card-header { height: 98px; padding: 24px 40px; background: #f7f7f7; border-bottom: 2px solid #dadada; }
.card-body { padding: 40px; height: 552px; display: flex; flex-direction: column; }
.card-body label { margin-bottom: 16px; }
.control {
  height: 76px;
  margin: 0 0 112px;
  border: 2px solid #ced4da;
  border-radius: 8px;
  background: #fff;
  font: inherit;
}
.area-wrap { position: relative; height: 124px; }
.area { display: block; width: 100%; height: 124px; margin: 0; resize: none; }
.grip { position: absolute; right: 3px; bottom: 3px; width: 16px; height: 16px; }
.card-footer { height: 112px; padding: 24px 40px; border-top: 2px solid #dadada; background: #f7f7f7; }
.btn {
  height: 62px;
  padding: 0 16px;
  border: 2px solid transparent;
  border-radius: 6.400px;
  font: 28px/58px "Open Sans", "Noto Sans", sans-serif;
  color: #fff;
  vertical-align: middle;
}
.primary { background: #007bff; border-color: #007bff; }
.danger { background: #dc3545; border-color: #dc3545; }
.plain { background: transparent; color: #212529; }

.list { width: 1229px; padding: 40px 40px 0; height: 1100px; }
table { width: 1145px; border-collapse: collapse; table-layout: fixed; }
.c-num { width: 71px; }
.c-title { width: 315px; }
.c-desc { width: 370px; }
.c-default { width: 169px; }
th, td { border: 2px solid #dee2e6; padding: 24px 24px; vertical-align: top; text-align: left; }
th { border-bottom-width: 4px; text-align: center; font-weight: 700; padding-left: 0; padding-right: 0; }
td.mid { text-align: center; padding-left: 0; padding-right: 0; }
td a { color: #226dbe; }
td .btn { display: inline-block; vertical-align: top; }
.badge {
  display: inline-block;
  padding: 6px 9.600px;
  border-radius: 8px;
  font-size: 24px;
  font-weight: 700;
  line-height: 24px;
  vertical-align: baseline;
  color: #fff;
}
.yes { background: #28a745; }
.no { background: #17a2b8; }

.scrollbar { width: 34px; background: #f1f1f1; }
.thumb { height: 1009px; margin: 0 2px; background: #c1c1c1; }

/* taskbar */
.taskbar {
  position: relative;
  height: 60px;
  flex: none;
  display: flex;
  justify-content: space-between;
  background: linear-gradient(90deg, #27292b 0, #27292b 450px, #454545 560px, #454545 2270px, #4a3a3c 2300px, #4a3a3c 2360px, #454545 2400px);
}
.apps { display: flex; }
.app { width: 74px; height: 60px; display: flex; justify-content: center; align-items: center; }
.app:nth-child(-n+3) { width: 72px; }
.app:nth-child(4) { margin-left: 5px; }
.app svg { width: 32px; height: 32px; }
.app.open { background: linear-gradient(#76b9ed, #76b9ed) 50% 100% / 56px 4px no-repeat; }
.app.focused { width: 72px; margin: 0 1px; background: linear-gradient(#76b9ed, #76b9ed) 0 100% / 100% 4px no-repeat, #696969; }
.tray { display: flex; align-items: center; color: #fff; font-size: 24px; padding-right: 50px; }
.tray > svg:nth-child(2) { margin-left: 35px; }
.tray > svg:nth-child(3) { margin-left: 38px; }
.tray > svg:nth-child(4) { margin-left: 34px; }
.ink { width: 64px; height: 60px; margin-left: 16px; display: flex; align-items: center; justify-content: center; background: #5f5657; }
.lang { width: 45px; margin-left: 12px; }
.clock { width: 54px; margin-left: 27px; }
.tray > svg:last-child { margin-left: 41px; }
.taskbar::after { content: ""; position: absolute; right: 8px; top: 0; width: 2px; height: 60px; background: #7a7a7a; }
.tooltip {
  position: absolute;
  left: 2132px;
  bottom: 60px;
  width: 271px;
  height: 37px;
  padding-left: 5px;
  border: 1px solid #8a8a8a;
  background: rgba(255, 255, 255, .76);
  box-shadow: 3px 3px 3px rgba(0, 0, 0, .3);
  color: rgba(60, 60, 60, .72);
  font-size: 24px;
  line-height: 35px;
  letter-spacing: -.72px;
  white-space: nowrap;
}
```
